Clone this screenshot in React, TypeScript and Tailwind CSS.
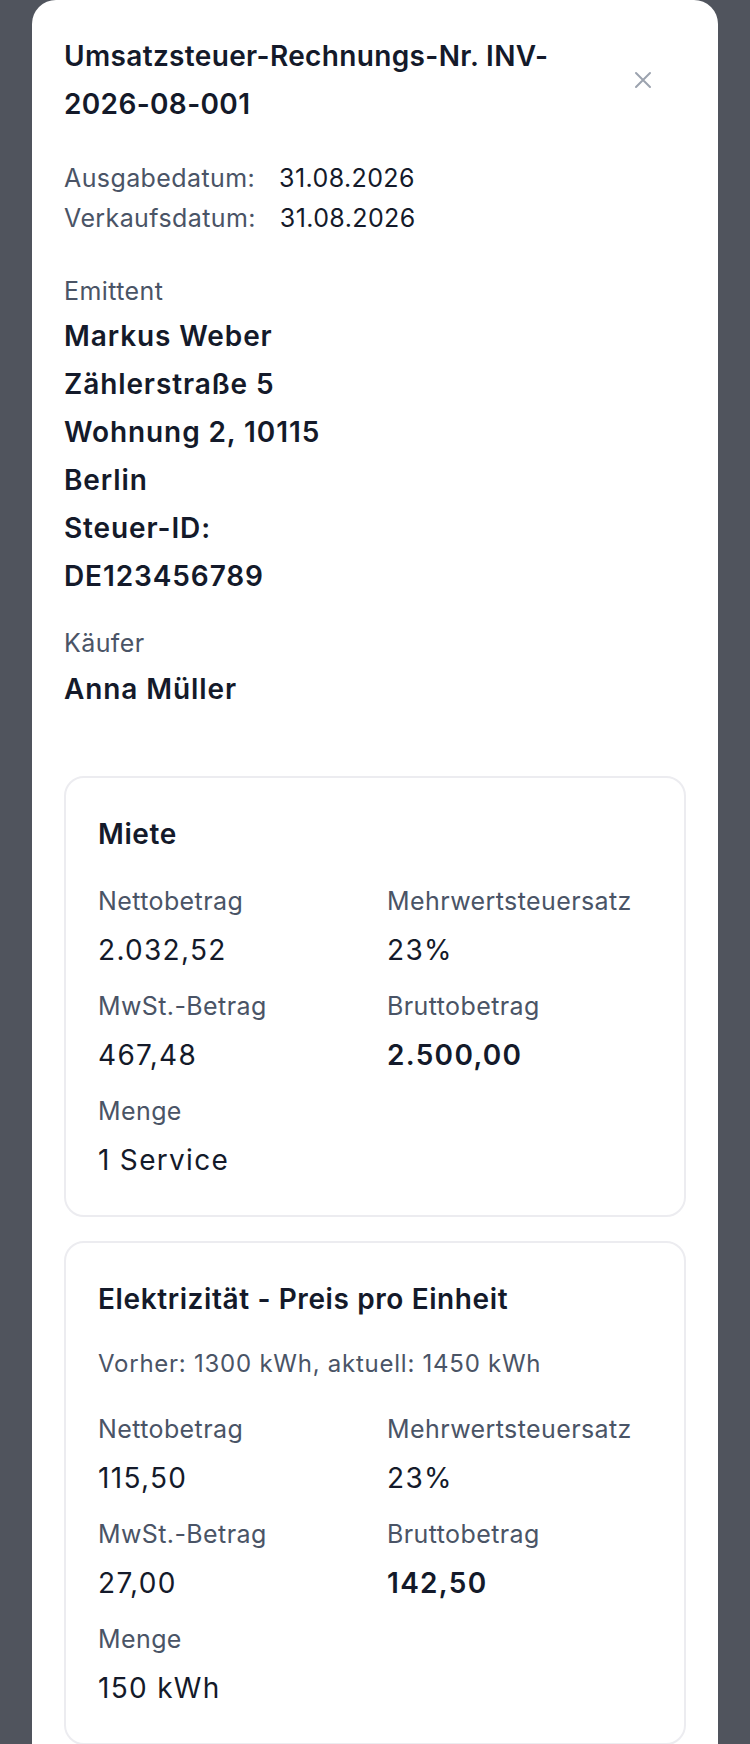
import React from "react";

const font = { fontFamily: "Inter, 'Noto Sans', sans-serif" };

function Field({ label, value, bold }: { label: string; value: string; bold?: boolean }) {
  return (
    <div>
      <div className="text-[25px] leading-[36px] tracking-[0.4px] text-[#4a5466]">{label}</div>
      <div
        className={
          "mt-[10px] text-[28px] leading-[42px] tracking-[1.3px] text-[#141a2a] " +
          (bold ? "font-semibold" : "font-normal")
        }
      >
        {value}
      </div>
    </div>
  );
}

function Card({
  title,
  subtitle,
  netto,
  rate,
  mwst,
  brutto,
  menge,
}: {
  title: string;
  subtitle?: string;
  netto: string;
  rate: string;
  mwst: string;
  brutto: string;
  menge: string;
}) {
  return (
    <div className="rounded-[20px] border-2 border-[#ececf0] px-8 pt-[36px] pb-[34px]">
      <div className="text-[28px] font-semibold leading-[40px] tracking-[0.6px] text-[#141a2a]">{title}</div>
      {subtitle && (
        <div className="mt-[27px] text-[24px] leading-[36px] tracking-[0.75px] text-[#4a5466]">{subtitle}</div>
      )}
      <div className="mt-[29px] grid grid-cols-2 gap-x-6 gap-y-[17px]">
        <Field label="Nettobetrag" value={netto} />
        <Field label="Mehrwertsteuersatz" value={rate} />
        <Field label="MwSt.-Betrag" value={mwst} />
        <Field label="Bruttobetrag" value={brutto} bold />
        <Field label="Menge" value={menge} />
      </div>
    </div>
  );
}

export default function App() {
  return (
    <div className="min-h-[1744px] bg-[#50545d] px-8" style={font}>
      <div className="rounded-t-[24px] bg-white px-8 pt-8 pb-10 min-h-[1744px]">
        <div className="flex items-start">
          <h1 className="flex-1 text-[28px] font-semibold leading-[48px] tracking-[0.35px] text-[#141a2a]">
            Umsatzsteuer-Rechnungs-Nr. INV-
            <br />
            2026-08-001
          </h1>
          <button className="mt-6 mr-[19px] flex h-12 w-12 items-center justify-center text-[#9ca3af]">
            <svg width="18" height="18" viewBox="0 0 18 18" fill="none" stroke="currentColor" strokeWidth="2" strokeLinecap="round">
              <path d="M2 2L16 16M16 2L2 16" />
            </svg>
          </button>
        </div>

        <div className="mt-[30px] text-[25px] leading-[40px] tracking-[0.4px]">
          <div>
            <span className="text-[#4a5466]">Ausgabedatum:</span>
            <span className="ml-[24px] text-[#141a2a]">31.08.2026</span>
          </div>
          <div>
            <span className="text-[#4a5466]">Verkaufsdatum:</span>
            <span className="ml-[24px] text-[#141a2a]">31.08.2026</span>
          </div>
        </div>

        <div className="mt-[35px]">
          <div className="text-[25px] leading-[36px] tracking-[0.4px] text-[#4a5466]">Emittent</div>
          <div className="mt-[3px] text-[28px] font-semibold leading-[48px] tracking-[0.9px] text-[#141a2a]">
            <div>Markus Weber</div>
            <div>Zählerstraße 5</div>
            <div>Wohnung 2, 10115</div>
            <div>Berlin</div>
            <div>Steuer-ID:</div>
            <div>DE123456789</div>
          </div>
        </div>

        <div className="mt-[25px]">
          <div className="text-[25px] leading-[36px] tracking-[0.4px] text-[#4a5466]">Käufer</div>
          <div className="mt-[4px] text-[28px] font-semibold leading-[48px] tracking-[0.9px] text-[#141a2a]">
            Anna Müller
          </div>
        </div>

        <div className="mt-[63px] flex flex-col gap-[24px]">
          <Card
            title="Miete"
            netto="2.032,52"
            rate="23%"
            mwst="467,48"
            brutto="2.500,00"
            menge="1 Service"
          />
          <Card
            title="Elektrizität - Preis pro Einheit"
            subtitle="Vorher: 1300 kWh, aktuell: 1450 kWh"
            netto="115,50"
            rate="23%"
            mwst="27,00"
            brutto="142,50"
            menge="150 kWh"
          />
        </div>
      </div>
    </div>
  );
}
